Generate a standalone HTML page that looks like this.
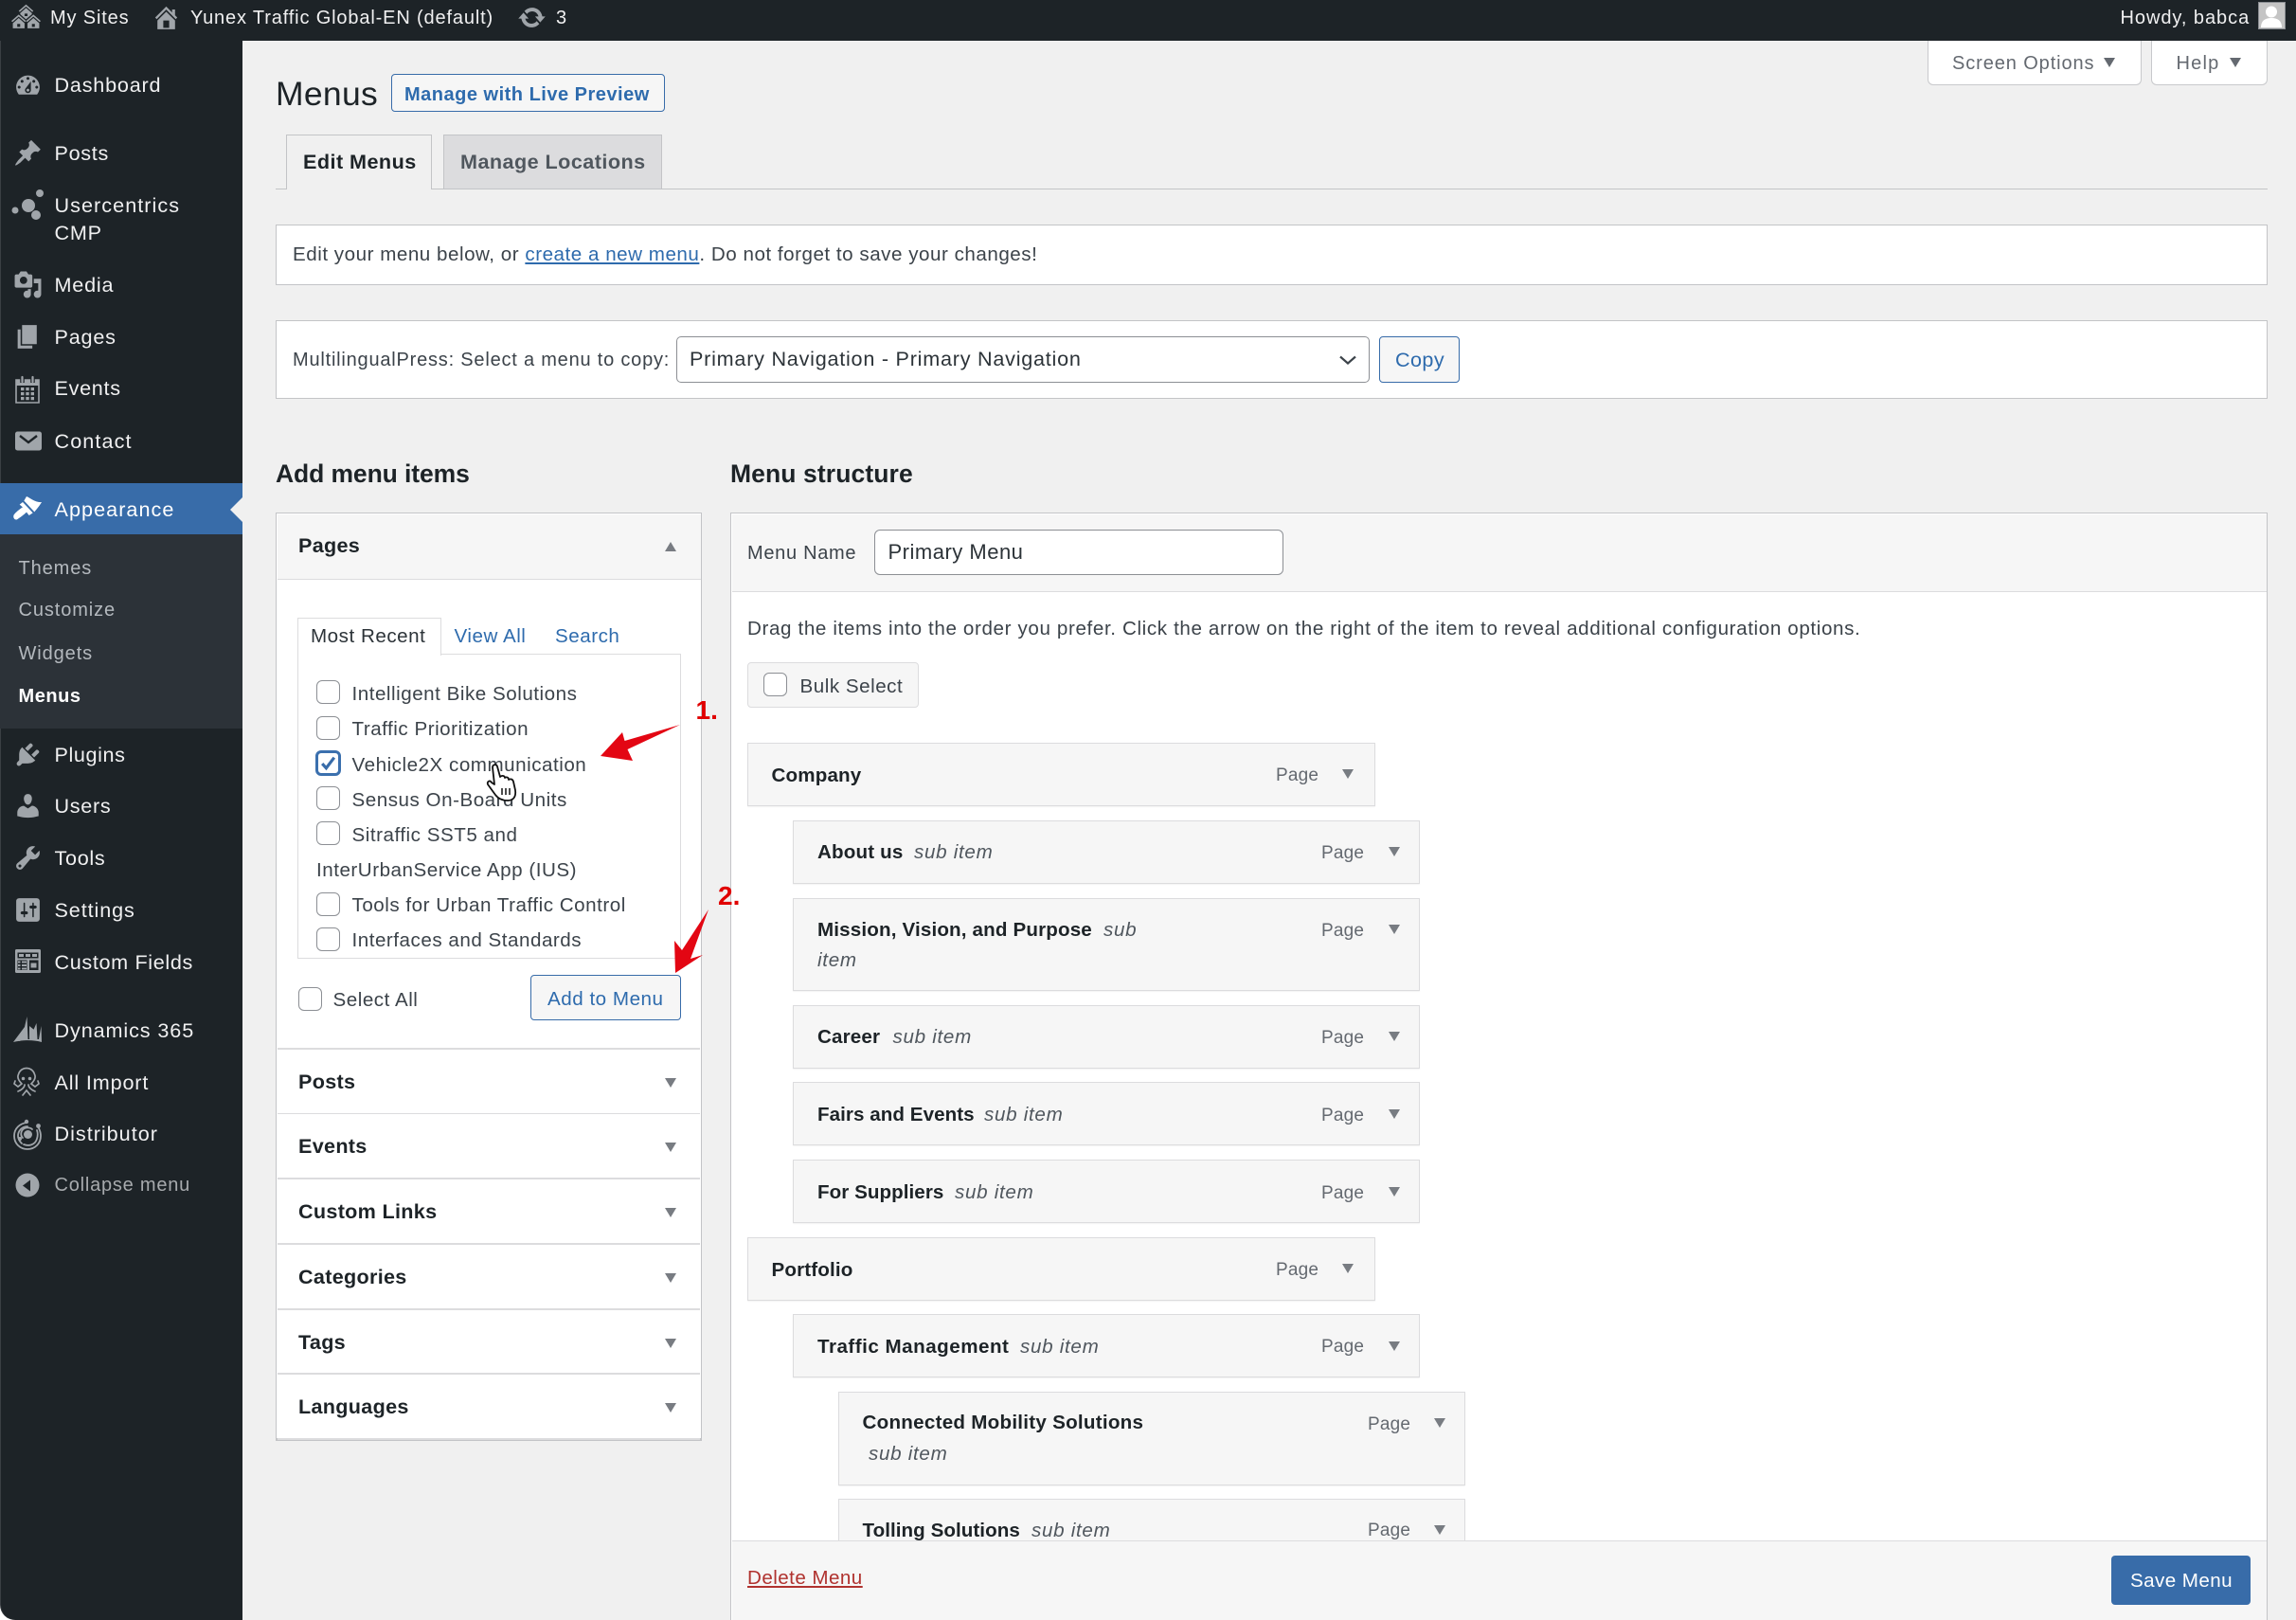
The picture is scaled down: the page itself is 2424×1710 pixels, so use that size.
<!DOCTYPE html>
<html lang="en"><head><meta charset="utf-8"><title>Menus</title>
<style>
html,body{margin:0;padding:0;background:#fff}
#p{position:relative;width:2424px;height:1710px;overflow:hidden;background:#f0f0f0;font-family:"Liberation Sans",Arial,sans-serif;font-size:20.6px;color:#3c434a}
#p div,#p span,#p a,#p svg,#p h1,#p h2{position:absolute;margin:0}
.t{line-height:30px;white-space:nowrap;letter-spacing:.52px}
.b{font-weight:700;color:#1d2327;font-size:21.6px;letter-spacing:.3px}
.ib{font-weight:700;color:#1d2327;letter-spacing:.15px}
.s{font-style:italic;color:#50575e;letter-spacing:.7px}
.m{color:#f0f0f1;left:57.5px;font-size:21.6px;letter-spacing:.8px}
.sub{color:#b4b9be;left:19.5px;font-size:20px;letter-spacing:.9px}
.pg{color:#646970;font-size:19px;letter-spacing:.2px}
.top{font-size:20px;color:#f0f0f1;letter-spacing:.85px;top:3.5px}
.ic{fill:#a0a5aa;left:13.5px;width:31px;height:31px}
.box{background:#fff;border:1.5px solid #c3c4c7;box-sizing:border-box}
.it{background:#f6f6f6;border:1.5px solid #dcdcde;box-sizing:border-box;box-shadow:0 1px 1px rgba(0,0,0,.05)}
.cb{width:25px;height:25px;box-sizing:border-box;background:#fff;border:1.5px solid #8c8f94;border-radius:6px}
.tri{width:0;height:0;border-left:6.5px solid transparent;border-right:6.5px solid transparent;border-top:10.5px solid #787c82}
.ln{background:#dcdcde;height:1.5px;left:293px;width:446px}
.link{color:#2e6bad}
.btn{box-sizing:border-box;border:1.5px solid #386ca9;border-radius:4px;background:#f6f6f6}
</style></head><body>
<div id="p">

<!-- admin bar -->
<div style="left:0;top:0;width:2424px;height:43px;background:#1d2327"></div>
<svg viewBox="0 0 20 20" style="left:12px;top:2px;width:31px;height:31px;fill:#a0a5aa"><path d="M14.27 6.87L10 3.14 5.73 6.87 5 6.14l5-4.38 5 4.38zM14 8.42l-4.05 3.43L6 8.38v-.74l4-3.5 4 3.5v.78zM11 9.7V8H9v1.7h2zm-1.73 4.03L5 10 .73 13.73 0 13l5-4.38L10 13zm10 0L15 10l-4.27 3.73L10 13l5-4.38L20 13zM5 11l4 3.5V18H1v-3.5zm10 0l4 3.5V18h-8v-3.5zm-9 6v-2H4v2h2zm10 0v-2h-2v2h2z"/></svg>
<span class="t top" style="left:53px">My Sites</span>
<svg viewBox="0 0 20 20" style="left:160px;top:3px;width:31px;height:31px;fill:#a0a5aa"><path d="M16 8.5l1.53 1.53-1.06 1.06L10 4.62l-6.47 6.47-1.06-1.06L10 2.5l4 4v-2h2v4zm-6-2.46l6 5.99V18H4v-5.97zM12 17v-5H8v5h4z"/></svg>
<span class="t top" style="left:201px">Yunex Traffic Global-EN (default)</span>
<svg viewBox="0 0 20 20" style="left:546px;top:3px;width:31px;height:31px;fill:#a0a5aa"><path d="M10.2 3.28c3.53 0 6.43 2.61 6.92 6h2.08l-3.5 4-3.5-4h2.32c-.45-1.97-2.21-3.45-4.32-3.45-1.45 0-2.73.71-3.54 1.78L4.95 5.66C6.23 4.2 8.11 3.28 10.2 3.28zm-.4 13.44c-3.52 0-6.43-2.61-6.92-6H.8l3.5-4c1.17 1.33 2.33 2.67 3.5 4H5.48c.45 1.97 2.21 3.45 4.32 3.45 1.45 0 2.73-.71 3.54-1.78l1.71 1.95c-1.28 1.46-3.15 2.38-5.25 2.38z"/></svg>
<span class="t top" style="left:587px">3</span>
<span class="t top" style="left:2238.5px;letter-spacing:.95px">Howdy, babca</span>
<div style="left:2384px;top:2px;width:29px;height:29px;box-sizing:border-box;border:1.5px solid #8c8f94;background:#c4c4c4;overflow:hidden">
<svg viewBox="0 0 26 26" style="left:0;top:0;width:26px;height:26px;fill:#fff"><circle cx="13" cy="9.5" r="6"/><path d="M2 26c0-7 4-10 11-10s11 3 11 10z"/></svg></div>

<!-- sidebar -->
<div style="left:0;top:43px;width:256px;height:1667px;background:#fff"></div>
<div style="left:0;top:43px;width:256px;height:1667px;background:#1d2327;border-bottom-left-radius:16px;box-sizing:border-box;border-left:1px solid #3a3f43"></div>
<div style="left:0;top:510px;width:256px;height:54px;background:#386ca9"></div>
<svg viewBox="0 0 13 26" style="left:243px;top:525px;width:13px;height:26px;fill:#f0f0f0"><path d="M13 0V26L0 13z"/></svg>
<div style="left:0;top:564px;width:256px;height:205px;background:#2c3238"></div>

<svg class="ic" viewBox="0 0 20 20" style="top:74.5px"><path d="M3.76 16h12.48c1.1-1.37 1.76-3.11 1.76-5 0-4.42-3.58-8-8-8s-8 3.58-8 8c0 1.89.66 3.63 1.76 5zM10 4c.55 0 1 .45 1 1s-.45 1-1 1-1-.45-1-1 .45-1 1-1zM6 6c.55 0 1 .45 1 1s-.45 1-1 1-1-.45-1-1 .45-1 1-1zm8 0c.55 0 1 .45 1 1s-.45 1-1 1-1-.45-1-1 .45-1 1-1zm-5.37 5.55L12 7v6c0 1.1-.9 2-2 2s-2-.9-2-2c0-.57.24-1.08.63-1.45zM4 10c.55 0 1 .45 1 1s-.45 1-1 1-1-.45-1-1 .45-1 1-1zm12 0c.55 0 1 .45 1 1s-.45 1-1 1-1-.45-1-1 .45-1 1-1zm-5 3c0-.55-.45-1-1-1s-1 .45-1 1 .45 1 1 1 1-.45 1-1z"/></svg>
<span class="t m" style="top:75px">Dashboard</span>
<svg class="ic" viewBox="0 0 20 20" style="top:146px"><path d="M10.44 3.02l1.82-1.82 6.36 6.35-1.83 1.82c-1.05-.68-2.48-.57-3.41.36l-.75.75c-.92.93-1.04 2.35-.35 3.41l-1.83 1.82-2.41-2.41-2.8 2.79c-.42.42-3.38 2.71-3.8 2.29s1.86-3.39 2.28-3.81l2.79-2.79L4.1 9.36l1.83-1.82c1.05.69 2.48.57 3.4-.36l.75-.75c.93-.92 1.05-2.35.36-3.41z"/></svg>
<span class="t m" style="top:147px;letter-spacing:.7px">Posts</span>
<svg style="left:0;top:195px;width:56px;height:40px;fill:#a0a5aa" viewBox="0 195 56 40"><circle cx="42" cy="204" r="4"/><circle cx="30" cy="217" r="7"/><circle cx="16" cy="222" r="3.5"/><circle cx="38" cy="227" r="5"/></svg>
<span class="t m" style="top:202px;letter-spacing:1.05px">Usercentrics</span>
<span class="t m" style="top:231px">CMP</span>
<svg class="ic" viewBox="0 0 20 20" style="top:285px"><path d="M13 11V4c0-.55-.45-1-1-1h-1.67L9 1H5L3.67 3H2c-.55 0-1 .45-1 1v7c0 .55.45 1 1 1h10c.55 0 1-.45 1-1zM7 4.5c1.38 0 2.5 1.12 2.5 2.5S8.38 9.5 7 9.5 4.5 8.38 4.5 7 5.62 4.5 7 4.5zM14 6h5v10.5c0 1.38-1.12 2.5-2.5 2.5S14 17.88 14 16.5s1.12-2.5 2.5-2.5c.17 0 .34.02.5.05V9h-3V6zm-4 8.05V13h2v3.5c0 1.38-1.12 2.5-2.5 2.5S7 17.88 7 16.5 8.12 14 9.5 14c.17 0 .34.02.5.05z"/></svg>
<span class="t m" style="top:286px">Media</span>
<svg class="ic" viewBox="0 0 20 20" style="top:340px"><path d="M6 15V2h10v13H6zm-1 1h8v2H3V5h2v11z"/></svg>
<span class="t m" style="top:341px">Pages</span>
<svg style="left:16px;top:396px;width:26px;height:30px" viewBox="0 0 26 30"><path d="M1 5H25V29H1z" fill="none" stroke="#a0a5aa" stroke-width="1.6"/><path fill="#a0a5aa" d="M1 5H25V11H1z"/><path d="M7.5 2V8M18.5 2V8" stroke="#1d2327" stroke-width="4.5"/><path d="M7.5 2V7M18.5 2V7" stroke="#a0a5aa" stroke-width="2.2" stroke-linecap="round"/><path fill="#a0a5aa" d="M6 13h3.4v3.2H6zM11.3 13h3.4v3.2h-3.4zM16.6 13H20v3.2h-3.4zM6 18h3.4v3.2H6zM11.3 18h3.4v3.2h-3.4zM16.6 18H20v3.2h-3.4zM6 23h3.4v3.2H6zM11.3 23h3.4v3.2h-3.4zM16.6 23H20v3.2h-3.4z"/></svg>
<span class="t m" style="top:395px;letter-spacing:.7px">Events</span>
<svg style="left:16px;top:455px;width:28px;height:21px" viewBox="0 0 28 21"><rect width="28" height="20" y=".5" rx="2.5" fill="#a0a5aa"/><path d="M5 5L14 12 23 5" fill="none" stroke="#1d2327" stroke-width="2.4"/></svg>
<span class="t m" style="top:451px;letter-spacing:1.1px">Contact</span>
<svg viewBox="0 0 300 540" style="left:0;top:380px;width:100px;height:180px;fill:#fff"><path d="M84 432C98 438 112 452 132 450 124 464 116 472 109 481L82 452 76 446Z"/><path d="M72 450L104 484 92 492 84 482C76 490 62 500 54 505 46 508 40 498 44 490 50 482 62 472 72 466L62 458Z"/></svg>
<span class="t m" style="top:523px;color:#fff;letter-spacing:1.05px">Appearance</span>

<span class="t sub" style="top:584.5px">Themes</span>
<span class="t sub" style="top:629px">Customize</span>
<span class="t sub" style="top:674.5px">Widgets</span>
<span class="t sub" style="top:719.5px;color:#fff;font-weight:700;letter-spacing:.55px">Menus</span>

<svg class="ic" viewBox="0 0 20 20" style="top:781px"><path d="M13.11 4.36L9.87 7.6 8 5.73l3.24-3.24c.35-.34 1.05-.2 1.56.32.52.51.66 1.21.31 1.55zm-8 1.77l.91-1.12 9.01 9.01-1.19.84c-.71.71-2.63 1.16-3.82 1.16H6.14L4.9 17.26c-.59.59-1.54.59-2.12 0-.59-.58-.59-1.53 0-2.12l1.24-1.24v-3.88c0-1.13.4-3.19 1.09-3.89zm7.26 3.97l3.24-3.24c.34-.35 1.04-.21 1.55.31.52.51.66 1.21.31 1.55l-3.24 3.25z"/></svg>
<span class="t m" style="top:782px;letter-spacing:.6px">Plugins</span>
<svg class="ic" viewBox="0 0 20 20" style="top:835px"><path d="M10 9.25c-2.27 0-2.73-3.44-2.73-3.44C7 4.02 7.82 2 9.97 2c2.16 0 2.98 2.02 2.71 3.81 0 0-.41 3.44-2.68 3.44zm0 2.57L12.72 10c2.39 0 4.52 2.33 4.52 4.53v2.49s-3.65 1.13-7.24 1.13c-3.65 0-7.24-1.13-7.24-1.13v-2.49c0-2.25 1.94-4.48 4.47-4.48z"/></svg>
<span class="t m" style="top:836px;letter-spacing:.7px">Users</span>
<svg class="ic" viewBox="0 0 20 20" style="top:890px"><path d="M16.68 9.77c-1.34 1.34-3.3 1.67-4.95.99l-5.41 6.52c-.99.99-2.59.99-3.58 0s-.99-2.59 0-3.57l6.52-5.42c-.68-1.65-.35-3.61.99-4.95 1.28-1.28 3.12-1.62 4.72-1.06l-2.89 2.89 2.82 2.82 2.86-2.87c.53 1.58.18 3.39-1.08 4.65zM3.81 16.21c.4.39 1.04.39 1.43 0 .4-.4.4-1.04 0-1.43-.39-.4-1.03-.4-1.43 0-.39.39-.39 1.03 0 1.43z"/></svg>
<span class="t m" style="top:891px;letter-spacing:.7px">Tools</span>
<svg class="ic" viewBox="0 0 20 20" style="top:945px"><path d="M18 16V4c0-1.1-.9-2-2-2H4c-1.1 0-2 .9-2 2v12c0 1.1.9 2 2 2h12c1.1 0 2-.9 2-2zM8 11h1c.55 0 1 .45 1 1s-.45 1-1 1H8v1.5c0 .28-.22.5-.5.5s-.5-.22-.5-.5V13H6c-.55 0-1-.45-1-1s.45-1 1-1h1V5.5c0-.28.22-.5.5-.5s.5.22.5.5V11zm5-2h-1c-.55 0-1-.45-1-1s.45-1 1-1h1V5.5c0-.28.22-.5.5-.5s.5.22.5.5V7h1c.55 0 1 .45 1 1s-.45 1-1 1h-1v5.5c0 .28-.22.5-.5.5s-.5-.22-.5-.5V9z"/></svg>
<span class="t m" style="top:946px;letter-spacing:.9px">Settings</span>
<svg style="left:16px;top:1002px;width:27px;height:25px" viewBox="0 0 27 25"><rect width="27" height="25" rx="1.5" fill="#a0a5aa"/><g fill="#1d2327"><rect x="2.5" y="3.5" width="22" height="6"/><rect x="2.5" y="11.5" width="10" height="10.5"/><rect x="15" y="11.5" width="9.5" height="10.5"/></g><g fill="#a0a5aa"><rect x="4" y="5" width="5" height="3"/><rect x="11" y="5" width="5" height="3"/><rect x="18" y="5" width="5" height="3"/><rect x="3" y="12.5" width="2.5" height="2"/><rect x="7" y="12.5" width="5" height="2"/><rect x="3" y="16" width="2.5" height="2"/><rect x="7" y="16" width="5" height="2"/><rect x="3" y="19.5" width="2.5" height="2"/><rect x="7" y="19.5" width="5" height="2"/><rect x="16.5" y="14.5" width="6" height="5"/></g></svg>
<span class="t m" style="top:1001px;letter-spacing:.65px">Custom Fields</span>

<svg style="left:14px;top:1073px;width:30px;height:28px;fill:#a0a5aa" viewBox="0 0 30 28"><path d="M0 27L12 11 14.5 0 15.5 24 17 24 24.5 7 25.5 24 27 24 29.5 10 30 27C20 24 8 25 0 27z"/><path d="M6 21L10 18V25L6 26zM17 10L22 14 22 23 17 23.5z"/></svg>
<span class="t m" style="top:1073px;letter-spacing:.9px">Dynamics 365</span>
<svg style="left:13px;top:1126px;width:30px;height:31px" viewBox="0 0 30 31" fill="none" stroke="#a0a5aa" stroke-width="1.7" stroke-linecap="round"><path d="M10 18C6 14 5 11 6.5 8C8 3 12 1.5 15 1.5S22 3 23.5 8C25 11 24 14 20 18L24 21 28 18M10 18L6 21 2 18M28 18L27 15M2 18L3 15"/><path d="M13 19C13 22 9 25 6 26M17 19C17 22 21 25 24 26M11 30L15 25 19 30"/><circle cx="11.5" cy="12.5" r=".9" fill="#a0a5aa"/><circle cx="18.5" cy="12.5" r=".9" fill="#a0a5aa"/></svg>
<span class="t m" style="top:1128px;letter-spacing:.85px">All Import</span>
<svg style="left:13px;top:1180px;width:32px;height:35px" viewBox="0 0 32 35" fill="none" stroke="#a0a5aa" stroke-width="1.8" stroke-linecap="round"><path d="M15 5C8 6 2 11 2 19c0 8 6 14 14 14s14-6 14-14c0-3-1-6-2-8"/><path d="M16 9c-6 0-10 5-10 10 0 3 2 6 4 8M12 28c5 2 12 1 14-6 1-3 1-6 0-9"/><path d="M11 21c-3-3-2-8 2-10 2-1 6-1 8 1"/><circle cx="16.5" cy="17.5" r="4.5" fill="#a0a5aa" stroke="none"/><circle cx="15" cy="4" r="2.2" fill="#a0a5aa" stroke="none"/><circle cx="27.5" cy="8.5" r="2.4" fill="#a0a5aa" stroke="none"/><circle cx="8" cy="22" r="2" fill="#a0a5aa" stroke="none"/></svg>
<span class="t m" style="top:1182px;letter-spacing:1px">Distributor</span>
<svg style="left:16px;top:1238px;width:26px;height:26px" viewBox="0 0 26 26"><circle cx="13" cy="13" r="12.5" fill="#a0a5aa"/><path d="M8 13.5L16 7.5V19.5z" fill="#1d2327"/></svg>
<span class="t" style="left:57.5px;top:1235.5px;font-size:20px;color:#a7aaad;letter-spacing:.78px">Collapse menu</span>

<!-- screen meta -->
<div class="box" style="left:2034.5px;top:43px;width:226px;height:47px;border-radius:0 0 6px 6px;border-color:#c8c9cc;border-top:0"></div>
<span class="t" style="left:2061px;top:52px;font-size:20px;color:#646970;letter-spacing:.9px">Screen Options</span>
<div class="tri" style="left:2220.5px;top:61px;border-top-color:#646970"></div>
<div class="box" style="left:2271px;top:43px;width:123px;height:47px;border-radius:0 0 6px 6px;border-color:#c8c9cc;border-top:0"></div>
<span class="t" style="left:2297.5px;top:52px;font-size:20px;color:#646970;letter-spacing:1.2px">Help</span>
<div class="tri" style="left:2353.5px;top:61px;border-top-color:#646970"></div>

<!-- title -->
<h1 class="t" style="left:291px;top:84px;font-size:35.5px;font-weight:400;color:#1d2327;letter-spacing:.3px">Menus</h1>
<div class="btn" style="left:413px;top:78px;width:289px;height:40px"></div>
<span class="t" style="left:427px;top:84.5px;font-size:20px;font-weight:700;color:#2e6bad;letter-spacing:.5px">Manage with Live Preview</span>

<!-- tabs -->
<div style="left:291px;top:198.5px;width:2103px;height:1.5px;background:#c3c4c7"></div>
<div style="left:302px;top:142px;width:154px;height:58px;box-sizing:border-box;background:#f0f0f0;border:1.5px solid #c3c4c7;border-bottom:0"></div>
<span class="t b" style="left:320px;top:156px;letter-spacing:.45px">Edit Menus</span>
<div style="left:468px;top:142px;width:231px;height:57px;box-sizing:border-box;background:#dcdcde;border:1.5px solid #c3c4c7;border-bottom:0"></div>
<span class="t b" style="left:486px;top:156px;color:#50575e;letter-spacing:.45px">Manage Locations</span>

<!-- notices -->
<div class="box" style="left:291px;top:237px;width:2103px;height:64px"></div>
<span class="t" style="left:309px;top:253.5px">Edit your menu below, or <a class="link" style="position:static;text-decoration:underline">create a new menu</a>. Do not forget to save your changes!</span>
<div class="box" style="left:291px;top:338px;width:2103px;height:83px"></div>
<span class="t" style="left:309px;top:364.5px;font-size:20px;letter-spacing:.79px">MultilingualPress: Select a menu to copy:</span>
<div style="left:714px;top:355px;width:732px;height:49px;box-sizing:border-box;background:#fff;border:1.5px solid #8c8f94;border-radius:5px"></div>
<span class="t" style="left:728px;top:364px;color:#2c3338;font-size:21.6px;letter-spacing:.76px">Primary Navigation - Primary Navigation</span>
<svg viewBox="0 0 20 12" style="left:1413px;top:374px;width:20px;height:12px"><path d="M2 2.5L10 9.5 18 2.5" fill="none" stroke="#3c434a" stroke-width="2.2"/></svg>
<div class="btn" style="left:1456px;top:355px;width:85px;height:49px"></div>
<span class="t link" style="left:1473px;top:365px;font-size:21.6px;letter-spacing:.4px">Copy</span>

<!-- left column -->
<h2 class="t b" style="left:291px;top:484.5px;font-size:26.5px;font-weight:700;letter-spacing:-.1px">Add menu items</h2>
<div class="box" style="left:291px;top:541px;width:450px;height:980px;border-bottom-width:3px"></div>
<div style="left:292.5px;top:542.5px;width:447px;height:68px;background:#f6f6f6;border-bottom:1.5px solid #dcdcde"></div>
<span class="t b" style="left:315px;top:560.5px">Pages</span>
<div class="tri" style="left:702px;top:572px;border-top:0;border-bottom:10.5px solid #787c82"></div>

<div style="left:314px;top:690px;width:404.5px;height:322px;box-sizing:border-box;background:#fff;border:1.5px solid #dcdcde"></div>
<div style="left:314px;top:652px;width:151.5px;height:40px;box-sizing:border-box;background:#fff;border:1.5px solid #dcdcde;border-bottom:0"></div>
<span class="t" style="left:328px;top:656.5px;color:#2c3338">Most Recent</span>
<span class="t link" style="left:479.5px;top:656.5px">View All</span>
<span class="t link" style="left:586px;top:656.5px">Search</span>

<div class="cb" style="left:334px;top:718px"></div><span class="t" style="left:371.5px;top:718px">Intelligent Bike Solutions</span>
<div class="cb" style="left:334px;top:755.5px"></div><span class="t" style="left:371.5px;top:755px">Traffic Prioritization</span>
<div class="cb" style="left:333px;top:792px;width:27px;height:27px;border:3px solid #3b70ae"></div>
<svg viewBox="0 0 20 20" style="left:336px;top:795px;width:21px;height:21px"><path d="M4 10.5L8 15 16 4.5" fill="none" stroke="#386ca9" stroke-width="3"/></svg>
<span class="t" style="left:371.5px;top:792.5px">Vehicle2X communication</span>
<div class="cb" style="left:334px;top:830px"></div><span class="t" style="left:371.5px;top:829.5px">Sensus On-Board Units</span>
<div class="cb" style="left:334px;top:867px"></div><span class="t" style="left:371.5px;top:866.5px">Sitraffic SST5 and</span>
<span class="t" style="left:334px;top:903.5px">InterUrbanService App (IUS)</span>
<div class="cb" style="left:334px;top:942px"></div><span class="t" style="left:371.5px;top:941px">Tools for Urban Traffic Control</span>
<div class="cb" style="left:334px;top:978.5px"></div><span class="t" style="left:371.5px;top:978px">Interfaces and Standards</span>

<div class="cb" style="left:315px;top:1042px"></div><span class="t" style="left:351.5px;top:1040.5px">Select All</span>
<div class="btn" style="left:560px;top:1029px;width:158.5px;height:48px"></div>
<span class="t link" style="left:578px;top:1039.5px">Add to Menu</span>

<div class="ln" style="top:1106px"></div>
<span class="t b" style="left:315px;top:1126.5px">Posts</span><div class="tri" style="left:702px;top:1138px"></div>
<div class="ln" style="top:1174.5px"></div>
<span class="t b" style="left:315px;top:1194.5px">Events</span><div class="tri" style="left:702px;top:1206px"></div>
<div class="ln" style="top:1243px"></div>
<span class="t b" style="left:315px;top:1263.5px">Custom Links</span><div class="tri" style="left:702px;top:1275px"></div>
<div class="ln" style="top:1312px"></div>
<span class="t b" style="left:315px;top:1332.5px">Categories</span><div class="tri" style="left:702px;top:1344px"></div>
<div class="ln" style="top:1381px"></div>
<span class="t b" style="left:315px;top:1401.5px">Tags</span><div class="tri" style="left:702px;top:1413px"></div>
<div class="ln" style="top:1449px"></div>
<span class="t b" style="left:315px;top:1469.5px">Languages</span><div class="tri" style="left:702px;top:1481px"></div>
<div class="ln" style="top:1518px"></div>

<!-- right column -->
<h2 class="t b" style="left:771px;top:484.5px;font-size:26.5px;font-weight:700;letter-spacing:.1px">Menu structure</h2>
<div class="box" style="left:771px;top:541px;width:1623px;height:1190px"></div>
<div style="left:772.5px;top:542.5px;width:1620px;height:81px;background:#f6f6f6;border-bottom:1.5px solid #dcdcde"></div>
<span class="t" style="left:789px;top:569px;font-size:20px;letter-spacing:.7px">Menu Name</span>
<div style="left:923px;top:559px;width:431.5px;height:47.5px;box-sizing:border-box;background:#fff;border:1.5px solid #8c8f94;border-radius:6px"></div>
<span class="t" style="left:937.5px;top:568px;color:#2c3338;font-size:22px;letter-spacing:.5px">Primary Menu</span>
<span class="t" style="left:789px;top:649px;letter-spacing:.625px">Drag the items into the order you prefer. Click the arrow on the right of the item to reveal additional configuration options.</span>
<div style="left:789px;top:699px;width:181px;height:48px;box-sizing:border-box;background:#f6f6f6;border:1.5px solid #dcdcde;border-radius:4px"></div>
<div class="cb" style="left:806px;top:709.5px"></div>
<span class="t" style="left:844.5px;top:709.5px">Bulk Select</span>

<!-- items -->
<div class="it" style="left:789px;top:784px;width:662.5px;height:67px"></div>
<span class="t ib" style="left:814.5px;top:804px">Company</span><span class="t pg" style="left:1347px;top:803.5px">Page</span><div class="tri" style="left:1417px;top:811.5px"></div>

<div class="it" style="left:837px;top:866px;width:662px;height:67px"></div>
<span class="t ib" style="left:863px;top:884.5px">About us</span><span class="t s" style="left:965px;top:884.5px">sub item</span><span class="t pg" style="left:1395px;top:885.5px">Page</span><div class="tri" style="left:1465.5px;top:893.5px"></div>

<div class="it" style="left:837px;top:947.5px;width:662px;height:98.5px"></div>
<span class="t ib" style="left:863px;top:966.5px">Mission, Vision, and Purpose</span><span class="t s" style="left:1165px;top:966.5px">sub</span><span class="t s" style="left:863px;top:999px">item</span><span class="t pg" style="left:1395px;top:967.5px">Page</span><div class="tri" style="left:1465.5px;top:975.5px"></div>

<div class="it" style="left:837px;top:1061px;width:662px;height:67px"></div>
<span class="t ib" style="left:863px;top:1079.5px">Career</span><span class="t s" style="left:942.5px;top:1079.5px">sub item</span><span class="t pg" style="left:1395px;top:1080.5px">Page</span><div class="tri" style="left:1465.5px;top:1088.5px"></div>

<div class="it" style="left:837px;top:1142px;width:662px;height:67px"></div>
<span class="t ib" style="left:863px;top:1161.5px;letter-spacing:.05px">Fairs and Events</span><span class="t s" style="left:1039px;top:1161.5px">sub item</span><span class="t pg" style="left:1395px;top:1162.5px">Page</span><div class="tri" style="left:1465.5px;top:1170.5px"></div>

<div class="it" style="left:837px;top:1224px;width:662px;height:67px"></div>
<span class="t ib" style="left:863px;top:1243.5px;letter-spacing:.05px">For Suppliers</span><span class="t s" style="left:1008px;top:1243.5px">sub item</span><span class="t pg" style="left:1395px;top:1244.5px">Page</span><div class="tri" style="left:1465.5px;top:1252.5px"></div>

<div class="it" style="left:789px;top:1306px;width:662.5px;height:67px"></div>
<span class="t ib" style="left:814.5px;top:1325.5px">Portfolio</span><span class="t pg" style="left:1347px;top:1326px">Page</span><div class="tri" style="left:1417px;top:1333.5px"></div>

<div class="it" style="left:837px;top:1387px;width:662px;height:67px"></div>
<span class="t ib" style="left:863px;top:1407px;letter-spacing:.5px">Traffic Management</span><span class="t s" style="left:1077px;top:1407px">sub item</span><span class="t pg" style="left:1395px;top:1407px">Page</span><div class="tri" style="left:1465.5px;top:1415.5px"></div>

<div class="it" style="left:884.5px;top:1469px;width:662.5px;height:98.5px"></div>
<span class="t ib" style="left:910.5px;top:1487px;letter-spacing:.26px">Connected Mobility Solutions</span><span class="t s" style="left:917px;top:1519.5px">sub item</span><span class="t pg" style="left:1444px;top:1488.5px">Page</span><div class="tri" style="left:1513.5px;top:1496.5px"></div>

<div class="it" style="left:884.5px;top:1582px;width:662.5px;height:67px"></div>
<span class="t ib" style="left:910.5px;top:1601px;letter-spacing:.05px">Tolling Solutions</span><span class="t s" style="left:1089px;top:1601px">sub item</span><span class="t pg" style="left:1444px;top:1601px">Page</span><div class="tri" style="left:1513.5px;top:1609.5px"></div>

<!-- footer -->
<div style="left:772.5px;top:1625.5px;width:1652px;height:90px;background:#f6f6f6;border-top:1.5px solid #dcdcde"></div>
<div style="left:2392.5px;top:541px;width:1.5px;height:1169px;background:#c3c4c7"></div>
<div style="left:2394px;top:43px;width:30px;height:1667px;background:#f0f0f0"></div>
<a class="t" style="left:789px;top:1650.5px;color:#b0322f;text-decoration:underline;letter-spacing:.45px">Delete Menu</a>
<div style="left:2229px;top:1642px;width:147px;height:52px;background:#386ca9;border-radius:4px"></div>
<span class="t" style="left:2249px;top:1653.5px;color:#fff;letter-spacing:.42px">Save Menu</span>

<!-- annotations -->
<svg viewBox="0 0 2424 1710" style="left:0;top:0;width:2424px;height:1710px;pointer-events:none">
<path d="M634 798L657 773 659.5 782 718 765 662.5 791 668 803z" fill="#e30613"/>
<path d="M713 1027L712 993 720 1003 748 960 729 1012 742 1008z" fill="#e30613"/>
<path d="M519 826c-2-3-5-1-4 2l8 11c3 4 7 6 13 6 6 0 9-4 8-11l-2-9c-1-3-3-3-5-2 0-3-3-3-4-2 0-2-3-3-5-1l-3-11c-1-3-5-2-5 1l2 18z" fill="#fff" stroke="#111" stroke-width="1.8" stroke-linejoin="round"/>
<path d="M530 832v7M534 832v7M538 832v7" stroke="#111" stroke-width="1.5"/>
</svg>
<span class="t" style="left:734.5px;top:735px;font-size:28px;font-weight:700;color:#e00000;letter-spacing:0">1.</span>
<span class="t" style="left:758px;top:931px;font-size:28px;font-weight:700;color:#e00000;letter-spacing:0">2.</span>

</div>
</body></html>
